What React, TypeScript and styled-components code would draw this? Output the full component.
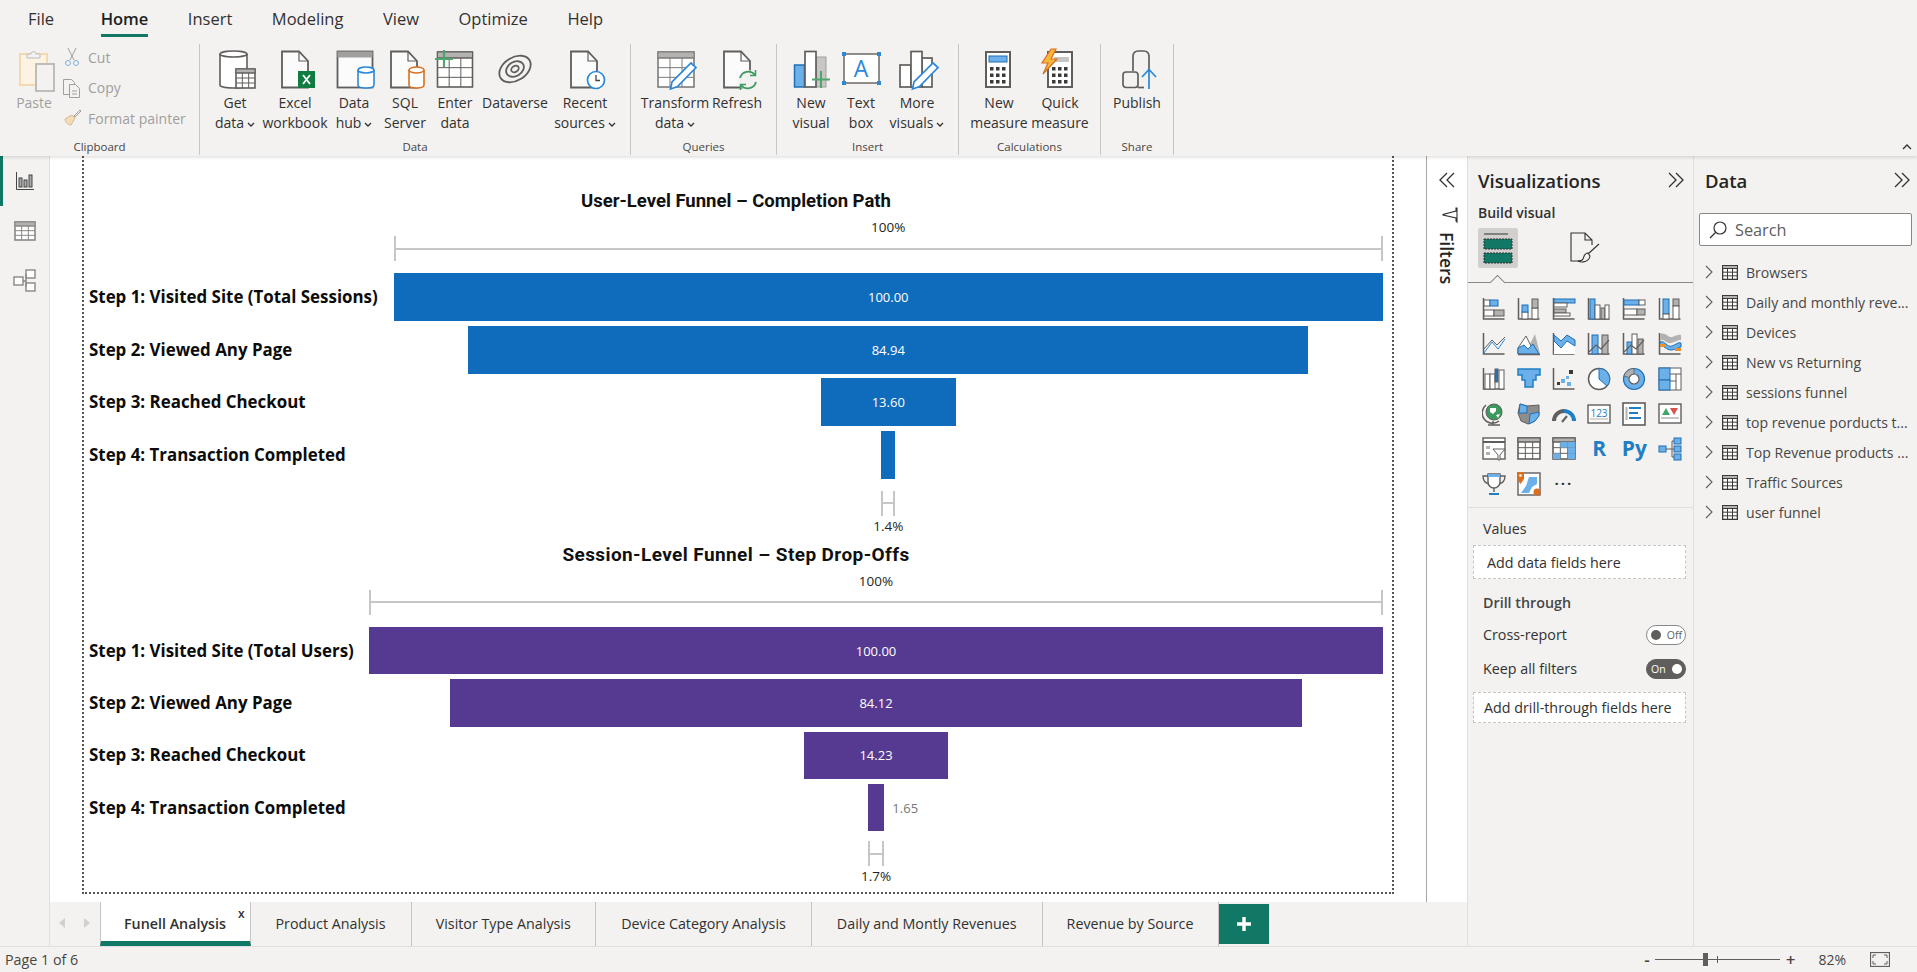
import React from 'react';
import styled, { createGlobalStyle } from 'styled-components';

const GlobalStyle = createGlobalStyle`
  html, body { margin: 0; padding: 0; height: 100%; background: #f3f2f1; overflow: hidden; }
  * { box-sizing: border-box; }
  body { font-family: 'Open Sans', 'Noto Sans', sans-serif; color: #323130; }
`;

const INK = '#605e5c';
const BLUE = '#2b88d8';
const SKY = '#6cb0ea';
const GREY = '#b4b2b0';

/* ---------- layout ---------- */
const Shell = styled.div`
  width: 1917px;
  height: 972px;
  display: flex;
  flex-direction: column;
  overflow: hidden;
`;
const Ribbon = styled.header`
  height: 156px;
  flex: none;
  position: relative;
  z-index: 2;
  box-shadow: 0 1px 4px rgba(0, 0, 0, 0.16);
  background: #f3f2f1;
`;
const MenuBar = styled.nav`
  height: 44px;
  display: flex;
  gap: 39.5px;
  padding-left: 28px;
  align-items: flex-start;
`;
const MenuItem = styled.div<{ $active?: boolean }>`
  height: 37px;
  line-height: 37px;
  font-size: 16.5px;
  font-weight: ${(p) => (p.$active ? 600 : 400)};
  color: ${(p) => (p.$active ? '#201f1e' : '#323130')};
  border-bottom: ${(p) => (p.$active ? '3px solid #117865' : '0')};
  margin-left: ${(p) => (p.$active ? '7px' : '0')};
`;
const Groups = styled.div`
  display: flex;
  height: 111px;
`;
const Group = styled.section<{ $w: number }>`
  width: ${(p) => p.$w}px;
  flex: none;
  height: 111px;
  border-right: 1px solid #c8c6c4;
  display: flex;
  flex-direction: column;
`;
const GroupBody = styled.div<{ $pad: number }>`
  height: 94px;
  padding: 6px 0 0 ${(p) => p.$pad}px;
  display: flex;
`;
const GroupName = styled.div`
  height: 17px;
  line-height: 17px;
  text-align: center;
  font-size: 11.5px;
  color: #484644;
`;
const BigButton = styled.div<{ $w: number; $muted?: boolean }>`
  width: ${(p) => p.$w}px;
  flex: none;
  display: flex;
  flex-direction: column;
  align-items: center;
  font-size: 14px;
  line-height: 20px;
  white-space: nowrap;
  color: ${(p) => (p.$muted ? '#a19f9d' : '#323130')};
  svg.big { margin-bottom: 3px; flex: none; }
`;
const Caret = styled.svg`
  width: 8px;
  height: 6px;
  margin-left: 3px;
  vertical-align: 0;
`;
const SmallStack = styled.div`
  display: flex;
  flex-direction: column;
  margin-left: 3px;
  gap: 10.5px;
  margin-top: -3px;
`;
const SmallButton = styled.div`
  display: flex;
  align-items: center;
  gap: 6px;
  height: 20px;
  font-size: 14px;
  white-space: nowrap;
  color: #a19f9d;
`;
const CollapseButton = styled.svg`
  position: absolute;
  right: 5px;
  bottom: 6px;
  width: 10px;
  height: 6px;
`;
const Workspace = styled.main`
  flex: 1;
  min-height: 0;
  display: flex;
`;
const NavRail = styled.aside`
  width: 50px;
  flex: none;
  border-right: 1px solid #e1dfdd;
  display: flex;
  flex-direction: column;
`;
const NavButton = styled.div<{ $active?: boolean }>`
  height: 50px;
  display: flex;
  align-items: center;
  justify-content: center;
  border-left: 3px solid ${(p) => (p.$active ? '#117865' : 'transparent')};
  padding-right: 3px;
`;
const ReportColumn = styled.div`
  flex: 1;
  min-width: 0;
  display: flex;
  flex-direction: column;
`;
const ReportArea = styled.div`
  flex: 1;
  min-height: 0;
  display: flex;
  background: #fff;
`;
const Canvas = styled.div`
  flex: 1;
  padding: 0 32px 8px 32px;
  min-width: 0;
`;
const Page = styled.div`
  height: 100%;
  border: 2px dotted #555;
  border-top: 0;
  padding: 33px 9px 0 5px;
`;
const FiltersStrip = styled.aside`
  width: 41px;
  flex: none;
  border-left: 1px solid #a8a6a4;
  display: flex;
  flex-direction: column;
  align-items: center;
  padding-top: 16px;
`;
const FiltersLabel = styled.div`
  writing-mode: vertical-rl;
  font-size: 17.5px;
  font-weight: 600;
  color: #252423;
  margin-top: 9px;
  line-height: 20px;
`;

/* ---------- funnel ---------- */
const Funnel = styled.section<{ $label: number }>`
  display: grid;
  grid-template-columns: ${(p) => p.$label}px 1fr;
  & + & { margin-top: 8px; }
`;
const FunnelTitle = styled.h2<{ $size: number; $track: number }>`
  grid-column: 1 / -1;
  margin: 0;
  height: 24px;
  line-height: 24px;
  text-align: center;
  font-family: Roboto, sans-serif;
  font-weight: 700;
  font-size: ${(p) => p.$size}px;
  letter-spacing: ${(p) => p.$track}px;
  color: #111;
`;
const TrackCell = styled.div`
  grid-column: 2;
  display: flex;
  flex-direction: column;
  align-items: center;
`;
const Percent = styled.div<{ $top: number }>`
  grid-column: 2;
  height: 17px;
  line-height: 17px;
  margin-top: ${(p) => p.$top}px;
  text-align: center;
  font-size: 13.5px;
  color: #252423;
`;
const Ruler = styled.div<{ $top: number }>`
  height: 25px;
  margin-top: ${(p) => p.$top}px;
  border-left: 2px solid #c8c6c4;
  border-right: 2px solid #c8c6c4;
  background: linear-gradient(#c8c6c4, #c8c6c4) center / 100% 2px no-repeat;
`;
const StepRows = styled.div<{ $top: number; $gap: number }>`
  grid-column: 1 / -1;
  margin-top: ${(p) => p.$top}px;
  display: flex;
  flex-direction: column;
  gap: ${(p) => p.$gap}px;
`;
const StepRow = styled.div<{ $h: number; $label: number }>`
  display: grid;
  grid-template-columns: ${(p) => p.$label}px 1fr;
  height: ${(p) => p.$h}px;
  align-items: center;
`;
const StepName = styled.div`
  font-size: 16.9px;
  font-weight: 700;
  color: #0c0c0c;
  white-space: nowrap;
  padding-bottom: 1px;
`;
const BarTrack = styled.div`
  height: 100%;
  display: flex;
  justify-content: center;
`;
const Bar = styled.div<{ $color: string }>`
  position: relative;
  height: 100%;
  background: ${(p) => p.$color};
  outline: 1px solid ${(p) => p.$color}99;
  outline-offset: -1px;
  color: #fff;
  font-size: 13px;
  display: flex;
  align-items: center;
  justify-content: center;
`;
const OutsideValue = styled.span`
  position: absolute;
  left: calc(100% + 8px);
  color: #777;
  font-size: 13px;
`;

/* ---------- tabs ---------- */
const TabBar = styled.div`
  height: 44px;
  flex: none;
  display: flex;
  align-items: stretch;
  background: #f3f2f1;
`;
const ArrowSlot = styled.div`
  width: 49.5px;
  flex: none;
  display: flex;
  align-items: center;
  justify-content: space-around;
  padding-bottom: 2px;
`;
const Tab = styled.div<{ $w: number; $active?: boolean }>`
  position: relative;
  width: ${(p) => p.$w}px;
  flex: none;
  display: flex;
  align-items: center;
  justify-content: center;
  font-size: 14.3px;
  font-weight: ${(p) => (p.$active ? 600 : 400)};
  white-space: nowrap;
  padding: ${(p) => (p.$active ? '3px 0 0' : '0 0 2px')};
  background: ${(p) => (p.$active ? '#fff' : 'transparent')};
  border-right: 1px solid #c8c6c4;
  border-left: ${(p) => (p.$active ? '1px solid #c8c6c4' : '0')};
  border-bottom: ${(p) => (p.$active ? '5px solid #117865' : '0')};
`;
const TabClose = styled.span`
  position: absolute;
  right: 5px;
  top: 3px;
  font-size: 12px;
  font-weight: 600;
`;
const AddTab = styled.div`
  width: 50px;
  flex: none;
  height: 40px;
  margin-top: 2px;
  background: #117865;
  color: #fff;
  display: flex;
  align-items: center;
  justify-content: center;
  svg { display: block; }
`;

/* ---------- right panes ---------- */
const VizPane = styled.aside`
  width: 226px;
  flex: none;
  border-left: 1px solid #e1dfdd;
  display: flex;
  flex-direction: column;
`;
const PaneHeader = styled.div<{ $pad: number; $end: number }>`
  height: 50px;
  flex: none;
  display: flex;
  align-items: center;
  justify-content: space-between;
  padding: 0 ${(p) => p.$end}px 2px ${(p) => p.$pad}px;
  font-size: 18.5px;
  font-weight: 600;
  color: #252423;
`;
const BuildLabel = styled.div`
  height: 14px;
  line-height: 14px;
  padding-left: 10px;
  font-size: 14px;
  font-weight: 600;
`;
const PaneTabs = styled.div`
  position: relative;
  height: 55px;
  margin-top: 8px;
  padding-left: 10px;
  border-bottom: 1px solid #8a8886;
  display: flex;
  gap: 46px;
  align-items: flex-start;
  &::after {
    content: '';
    position: absolute;
    left: 24px;
    bottom: -6px;
    width: 10px;
    height: 10px;
    background: #f3f2f1;
    border-left: 1px solid #8a8886;
    border-top: 1px solid #8a8886;
    transform: rotate(45deg);
  }
`;
const PaneTile = styled.div<{ $active?: boolean }>`
  width: 40px;
  height: 40px;
  border-radius: 2px;
  background: ${(p) => (p.$active ? '#d2d0ce' : 'transparent')};
  display: flex;
  align-items: center;
  justify-content: center;
`;
const VizGrid = styled.div`
  margin-top: 8px;
  padding: 0 0 6px 8px;
  display: grid;
  grid-template-columns: repeat(6, 35.2px);
  grid-auto-rows: 35px;
  border-bottom: 1px solid #e1dfdd;
`;
const VizCell = styled.div`
  display: flex;
  align-items: center;
  justify-content: center;
`;
const VizLetters = styled.span`
  font-size: 21px;
  font-weight: 700;
  line-height: 1;
  color: #1f7fc4;
`;
const FieldSection = styled.div`
  padding: 11px 7px 0 15px;
`;
const FieldLabel = styled.div<{ $top?: number; $strong?: boolean }>`
  height: 20px;
  line-height: 20px;
  font-size: 14.3px;
  font-weight: ${(p) => (p.$strong ? 600 : 400)};
  margin-top: ${(p) => p.$top ?? 0}px;
  color: ${(p) => (p.$strong ? '#484644' : '#323130')};
`;
const DropWell = styled.div<{ $h: number; $top: number; $pad: number }>`
  height: ${(p) => p.$h}px;
  margin: ${(p) => p.$top}px 0 0 -10px;
  padding-left: ${(p) => p.$pad}px;
  display: flex;
  align-items: center;
  background: #fff;
  border: 1px dashed #c8c6c4;
  font-size: 14.3px;
  white-space: nowrap;
`;
const OptionRow = styled.div<{ $top: number }>`
  display: flex;
  align-items: center;
  justify-content: space-between;
  height: 20px;
  margin-top: ${(p) => p.$top}px;
  padding-bottom: 2px;
  font-size: 14.3px;
`;
const Toggle = styled.div<{ $on?: boolean }>`
  width: 40px;
  height: 20px;
  margin-bottom: -2px;
  border-radius: 10px;
  display: flex;
  align-items: center;
  justify-content: space-between;
  padding: 0 3px 0 4px;
  font-size: 10.5px;
  background: ${(p) => (p.$on ? '#605e5c' : '#fff')};
  color: ${(p) => (p.$on ? '#fff' : '#605e5c')};
  border: 1px solid ${(p) => (p.$on ? '#605e5c' : '#8a8886')};
`;
const ToggleDot = styled.i<{ $on?: boolean }>`
  width: 10px;
  height: 10px;
  border-radius: 50%;
  background: ${(p) => (p.$on ? '#fff' : '#605e5c')};
`;
const DataPane = styled.aside`
  width: 224px;
  flex: none;
  border-left: 1px solid #e1dfdd;
  display: flex;
  flex-direction: column;
`;
const SearchBox = styled.div`
  height: 33px;
  margin: 7px 5px 11px 5px;
  background: #fff;
  border: 1px solid #8a8886;
  border-radius: 2px;
  display: flex;
  align-items: center;
  gap: 8px;
  padding-left: 9px;
  font-size: 16.3px;
  color: #605e5c;
`;
const TableRow = styled.div`
  height: 30px;
  display: flex;
  align-items: center;
  padding-left: 11px;
  gap: 8.5px;
  font-size: 14.1px;
  color: #484644;
  white-space: nowrap;
`;
const StatusBar = styled.footer`
  height: 26px;
  flex: none;
  border-top: 1px solid #e1dfdd;
  display: flex;
  align-items: center;
  padding-left: 5px;
  font-size: 14.3px;
  color: #484644;
`;
const ZoomControls = styled.div`
  margin-left: auto;
  display: flex;
  align-items: center;
  padding-right: 27px;
`;
const ZoomTrack = styled.div`
  position: relative;
  width: 125px;
  height: 1px;
  margin: 0 6px 0 5px;
  background: #605e5c;
`;
const ZoomThumb = styled.i`
  position: absolute;
  left: 48px;
  top: -6px;
  width: 5px;
  height: 13px;
  background: #605e5c;
`;
const ZoomTick = styled.i`
  position: absolute;
  left: 62px;
  top: -3px;
  width: 1px;
  height: 7px;
  background: #605e5c;
`;
const ZoomValue = styled.span`
  margin: 0 24px 0 23px;
  font-size: 14px;
`;
const ZoomSign = styled.span`
  font-size: 17px;
  font-weight: 600;
  line-height: 1;
`;

/* ---------- drawing helpers ---------- */
const Page_ = ({ x = 7 }: { x?: number }) => (
  <>
    <path d={`M${x} 1.5h17l9 9.5v26.5H${x}z`} fill="#fbfbfb" stroke={INK} strokeWidth="1.8" />
    <path d={`M${x + 17} 1.5V11h9`} fill="none" stroke={INK} strokeWidth="1.2" />
  </>
);
const Can = ({ x, y, w, h, c }: { x: number; y: number; w: number; h: number; c: string }) => (
  <>
    <path d={`M${x} ${y + 3}v${h - 6}c0 4 ${w} 4 ${w} 0v-${h - 6}`} fill="#fff" stroke={c} strokeWidth="1.6" />
    <ellipse cx={x + w / 2} cy={y + 3} rx={w / 2} ry="3" fill="#fff" stroke={c} strokeWidth="1.6" />
  </>
);
const Sheet = ({ x, y, w, h, cols, rows, head = 0, c = INK }: { x: number; y: number; w: number; h: number; cols: number; rows: number; head?: number; c?: string }) => {
  const lines: React.ReactNode[] = [];
  for (let i = 1; i < cols; i++) lines.push(<path key={`c${i}`} d={`M${x + (w * i) / cols} ${y + head}V${y + h}`} />);
  for (let i = head ? 0 : 1; i < rows; i++) lines.push(<path key={`r${i}`} d={`M${x} ${y + head + ((h - head) * i) / rows}H${x + w}`} />);
  return (
    <g stroke={c} fill="none" strokeWidth="1">
      <rect x={x} y={y} width={w} height={h} fill="#fff" strokeWidth="1.6" />
      {head ? <rect x={x} y={y} width={w} height={head} fill={GREY} stroke={c} /> : null}
      {lines}
    </g>
  );
};
const Pen = ({ x = 0, y = 0 }: { x?: number; y?: number }) => (
  <path transform={`translate(${x} ${y})`} d="M36 13l5 4.5-18.5 19-7 2.5 1.5-7z" fill="#fff" stroke={BLUE} strokeWidth="1.7" />
);
const Big = ({ children }: { children: React.ReactNode }) => (
  <svg className="big" width="40" height="40" viewBox="0 0 40 40" style={{ overflow: 'visible' }}>{children}</svg>
);
const Down = () => (
  <Caret viewBox="0 0 8 6"><path d="M1 1l3 3 3-3" fill="none" stroke="#323130" strokeWidth="1.3" /></Caret>
);
const Keys = ({ x, y }: { x: number; y: number }) => (
  <g fill="#3b3a39">
    {[0, 1, 2].map((r) => [0, 1, 2].map((c) => <rect key={`${r}${c}`} x={x + c * 6} y={y + r * 6.5} width="3.5" height="3.5" />))}
  </g>
);
const DoubleChevron = ({ left }: { left?: boolean }) => (
  <svg width="16" height="16" viewBox="0 0 16 16">
    <path d={left ? 'M8 1L1 8l7 7M15 1L8 8l7 7' : 'M1 1l7 7-7 7M8 1l7 7-7 7'} fill="none" stroke="#323130" strokeWidth="1.3" />
  </svg>
);

const ribbonIcons: Record<string, React.ReactNode> = {
  paste: (
    <>
      <rect x="6" y="4" width="27" height="31" fill="#fdf3e2" stroke="#f3d9b1" strokeWidth="2" />
      <path d="M13 8V4h4c0-3 5-3 5 0h4v4z" fill="#f3f2f1" stroke="#bbb" />
      <rect x="22" y="14" width="18" height="27" fill="#f3f2f1" stroke="#b9b7b5" strokeWidth="1.8" />
    </>
  ),
  get: (
    <>
      <Can x={5} y={1} w={27} h={37} c={INK} />
      <Sheet x={21} y={19} w={19} h={19} cols={3} rows={3} head={4} />
    </>
  ),
  excel: (
    <>
      <Page_ />
      <rect x="23" y="21" width="17" height="17" fill="#107c41" />
      <path d="M28 25l7 9M35 25l-7 9" stroke="#fff" strokeWidth="1.8" />
    </>
  ),
  hub: (
    <>
      <rect x="3.5" y="1.5" width="35" height="36" fill="#fbfbfb" stroke={INK} strokeWidth="1.8" />
      <rect x="3.5" y="1.5" width="35" height="6" fill="#a19f9d" />
      <Can x={24} y={17} w={16} h={21} c={BLUE} />
    </>
  ),
  sql: (
    <>
      <Page_ x={6} />
      <Can x={24} y={17} w={15} h={21} c="#d9701f" />
    </>
  ),
  enter: (
    <>
      <Sheet x={2.5} y={2} w={35} h={35} cols={3} rows={3} head={6} />
      <path d="M9 0v17M0 9h18" stroke="#4ea66d" strokeWidth="2.2" />
    </>
  ),
  dataverse: (
    <g fill="none" stroke={INK} strokeWidth="1.8" transform="rotate(-32 20 19)">
      <ellipse cx="20" cy="19" rx="17" ry="11.5" />
      <ellipse cx="20" cy="19" rx="9.5" ry="7" />
      <ellipse cx="20" cy="19" rx="4" ry="3" />
    </g>
  ),
  recent: (
    <>
      <Page_ x={6} />
      <circle cx="31" cy="30" r="8.5" fill="#fff" stroke={BLUE} strokeWidth="1.7" />
      <path d="M31 25v5.5h4" fill="none" stroke="#444" strokeWidth="1.3" />
    </>
  ),
  transform: (
    <>
      <Sheet x={3} y={2} w={36} h={35} cols={3} rows={3} head={6} c="#7d7b79" />
      <Pen />
    </>
  ),
  refresh: (
    <>
      <Page_ />
      <circle cx="31" cy="30" r="10" fill="#f3f2f1" />
      <path d="M23 28a8.5 8.5 0 0 1 15-3M39 32a8.5 8.5 0 0 1-15 3" fill="none" stroke="#3f9a62" strokeWidth="1.8" />
      <path d="M38.5 20v5.5H33M23.5 40v-5.5H29" fill="none" stroke="#3f9a62" strokeWidth="1.5" />
    </>
  ),
  visual: (
    <>
      <rect x="3.5" y="15" width="10" height="22" fill={SKY} stroke="#1f6fb5" strokeWidth="1.5" />
      <rect x="25" y="7" width="10" height="30" fill="#c8c6c4" stroke="#a19f9d" />
      <rect x="14" y="1.5" width="11" height="35.5" fill="#fff" stroke={INK} strokeWidth="1.7" />
      <path d="M30 21v17M21 29.5h18" stroke="#4ea66d" strokeWidth="2" />
    </>
  ),
  textbox: (
    <>
      <rect x="3" y="4" width="35" height="29" fill="#fff" stroke={INK} strokeWidth="1.4" />
      <g fill={BLUE}>
        <rect x="1" y="2" width="4" height="4" />
        <rect x="36" y="2" width="4" height="4" />
        <rect x="1" y="31" width="4" height="4" />
        <rect x="36" y="31" width="4" height="4" />
      </g>
      <text x="20" y="27" textAnchor="middle" fontSize="23" fontFamily="Open Sans, sans-serif" fill={BLUE}>A</text>
    </>
  ),
  more: (
    <>
      <rect x="3" y="15" width="11" height="22" fill="#fff" stroke={INK} strokeWidth="1.7" />
      <rect x="25" y="8" width="10" height="29" fill="#fff" stroke={INK} strokeWidth="1.7" />
      <rect x="14" y="1.5" width="11" height="35.5" fill="#fff" stroke={INK} strokeWidth="1.7" />
      <Pen />
    </>
  ),
  measure: (
    <>
      <rect x="7" y="2" width="24" height="35" fill="#fff" stroke={INK} strokeWidth="2" />
      <rect x="10" y="6" width="18" height="6" fill={SKY} stroke="#1f6fb5" />
      <Keys x={11} y={17} />
    </>
  ),
  quick: (
    <>
      <rect x="8" y="2" width="24" height="35" fill="#fff" stroke={INK} strokeWidth="2" />
      <rect x="14" y="7" width="15" height="5" fill="#c8c6c4" />
      <Keys x={12} y={17} />
      <path d="M11 -1L2 13h6L3 24 17 9h-6l5-10z" fill="#f6b73c" stroke="#d9701f" strokeWidth="1.2" />
    </>
  ),
  publish: (
    <>
      <path d="M16 21V6a5 5 0 0 1 5-5h6a5 5 0 0 1 5 5v14" fill="none" stroke={INK} strokeWidth="1.7" />
      <rect x="6" y="22" width="15" height="15.5" rx="3" fill="none" stroke={INK} strokeWidth="1.7" />
      <path d="M21 37.5h6" stroke={INK} strokeWidth="1.7" />
      <path d="M32 39V20M25 27l7-7.5 7 7.5" fill="none" stroke={BLUE} strokeWidth="1.7" />
    </>
  ),
};

const Axes = () => <path d="M1.5 1v21h21" fill="none" stroke={INK} strokeWidth="1.5" />;
type B = [number, number, number, number, string?];
const Bars = ({ items }: { items: B[] }) => (
  <>
    {items.map(([x, y, w, h, f], i) => (
      <rect key={i} x={x} y={y} width={w} height={h} fill={f ?? '#fff'} stroke={f === SKY ? '#1f6fb5' : INK} strokeWidth="1" />
    ))}
  </>
);
const Viz = ({ children }: { children: React.ReactNode }) => (
  <svg width="24" height="24" viewBox="0 0 24 24">{children}</svg>
);

const vizIcons: React.ReactNode[] = [
  <><Axes /><Bars items={[[2, 3, 6, 6], [8, 3, 8, 6, SKY], [2, 13, 10, 6], [12, 13, 10, 6, GREY]]} /></>,
  <><Axes /><Bars items={[[5, 15, 6, 7], [5, 8, 6, 7, SKY], [15, 11, 6, 11], [15, 2, 6, 9, GREY]]} /></>,
  <><Axes /><Bars items={[[2, 2, 21, 4, SKY], [2, 6, 13, 4], [2, 12, 12, 4, GREY], [2, 16, 16, 3]]} /></>,
  <><Axes /><Bars items={[[3, 2, 5, 20, SKY], [8, 8, 5, 14], [14, 11, 4, 11, GREY], [18, 8, 4, 14]]} /></>,
  <><Axes /><Bars items={[[2, 3, 15, 5, SKY], [17, 3, 6, 5, '#fff'], [2, 12, 13, 6], [15, 12, 8, 6, GREY]]} /></>,
  <><Axes /><Bars items={[[5, 2, 6, 15, SKY], [5, 17, 6, 5], [15, 2, 6, 7, GREY], [15, 9, 6, 13]]} /></>,
  <><Axes /><path d="M2 17l8-9 5 5 8-8" fill="none" stroke={INK} /><path d="M2 21l8-11 6 7 7-10" fill="none" stroke={BLUE} /></>,
  <><path d="M9 20l9-18 5 20H9z" fill={GREY} /><path d="M1 22V16L9 4l9 18z" fill="#fff" stroke={INK} /><path d="M1 22v-6l6-3 4 4 5-5 6 10z" fill={SKY} stroke="#1f6fb5" /><path d="M1 22.5h22" stroke={INK} strokeWidth="1.5" /></>,
  <><Axes /><path d="M2 4l7 7 6-6 8 5v12H2z" fill="#fff" stroke="none" /><path d="M2 3l7 6 6-6 8 5v6l-8-5-6 7-7-7z" fill={SKY} stroke="#1f6fb5" /></>,
  <><Axes /><Bars items={[[5, 3, 6, 19, SKY], [15, 3, 6, 19, GREY]]} /><path d="M2 20l7-7 5 4 8-9" fill="none" stroke={INK} strokeWidth="1.2" /></>,
  <><Axes /><Bars items={[[5, 10, 5, 12, SKY], [10, 2, 5, 20], [16, 7, 5, 15, GREY]]} /><path d="M2 20l7-7 5 4 8-9" fill="none" stroke={INK} strokeWidth="1.2" /></>,
  <><Axes /><path d="M2 2c6-2 8 4 12 3s6-3 9-2v5c-4 0-5 2-10 3s-6-4-11-3z" fill={GREY} /><path d="M2 10c5-2 7 6 12 4s6-4 9-3v4c-3 0-5 3-10 3s-7-5-11-4z" fill={SKY} stroke="#1f6fb5" /><path d="M2 12h5v3H2zM17 16h6v3h-6z" fill="#e8912d" /></>,
  <><Axes /><Bars items={[[3, 7, 5, 15], [8, 7, 5, 15], [13, 2, 3, 13, '#2b6fb5'], [17, 3, 5, 19]]} /></>,
  <path d="M1 2h22v6h-4v5h-3v7H8v-7H5V8H1z" fill={SKY} stroke="#1f7fc4" strokeWidth="1.5" />,
  <><Axes /><g fill={SKY}><rect x="9" y="12" width="4" height="4" /><rect x="15" y="15" width="4" height="4" /></g><g fill="#3b3a39"><rect x="5" y="15" width="3" height="3" /><rect x="17" y="3" width="4" height="4" /></g><rect x="14" y="9" width="3" height="3" fill={SKY} /></>,
  <><circle cx="12" cy="12" r="10.5" fill="#fff" stroke={INK} strokeWidth="1.5" /><path d="M12 1.5A10.5 10.5 0 0 1 20 19l-8-7z" fill={SKY} stroke="#1f6fb5" /></>,
  <><circle cx="12" cy="12" r="10.5" fill={SKY} stroke="#1f6fb5" strokeWidth="1.2" /><circle cx="12" cy="12" r="5" fill="#fff" stroke={INK} strokeWidth="1.2" /><path d="M12 1.5A10.5 10.5 0 0 0 2 9l5 1.5A5 5 0 0 1 12 7z" fill={GREY} stroke={INK} strokeWidth=".8" /></>,
  <><rect x="1" y="1" width="22" height="22" fill="#fff" stroke={INK} /><rect x="1" y="1" width="11" height="12" fill={SKY} stroke="#1f6fb5" /><rect x="1" y="13" width="11" height="10" fill={SKY} stroke="#1f6fb5" /><path d="M12 7h11M18 7v16M12 14h6" stroke={INK} /></>,
  <><circle cx="12" cy="10" r="8" fill="#3d9a5f" stroke={INK} /><path d="M8 6h6v3l-3 3-3-2zM14 13l4-1-2 4z" fill="#fff" /><path d="M4 3a10 10 0 0 0 13 16M6 23h12M11 19v4" fill="none" stroke={INK} strokeWidth="1.4" /></>,
  <><path d="M3 2l7 2 12-1v9l-4 7-7 3-7-3-3-8z" fill="#8f8d8b" stroke={INK} /><path d="M13 12l9-2v4l-4 5-6 3z" fill={SKY} stroke="#1f6fb5" /><path d="M3 2l7 2v7H2z" fill={SKY} stroke="#1f6fb5" /></>,
  <><path d="M2 19a10 10 0 0 1 10-10" fill="none" stroke={INK} strokeWidth="4" /><path d="M12 9a10 10 0 0 1 10 10" fill="none" stroke="#1f7fc4" strokeWidth="4" /><path d="M10 20l5-6" stroke={INK} strokeWidth="2" /></>,
  <><rect x="1" y="3" width="22" height="18" fill="#fbfbfb" stroke={INK} strokeWidth="1.4" /><path d="M3 17h18" stroke={GREY} /><text x="12" y="15" textAnchor="middle" fontSize="10" fontFamily="Open Sans, sans-serif" fill="#1f7fc4">123</text></>,
  <><rect x="1" y="1" width="22" height="22" fill="#fff" stroke={INK} strokeWidth="1.6" /><path d="M7 6h12M7 11h9M7 16h12" stroke="#1f7fc4" strokeWidth="2" /><path d="M4.5 5v13" stroke={GREY} strokeWidth="2" /></>,
  <><rect x="1" y="2" width="22" height="19" fill="#fff" stroke={INK} strokeWidth="1.4" /><path d="M4 13l4-7 4 7z" fill="#3fa667" /><path d="M12 6h8l-4 7z" fill="#d9534f" /><path d="M3 16h18" stroke={GREY} strokeWidth="1.5" /></>,
  <><rect x="1" y="1" width="22" height="21" fill="#fff" stroke={INK} strokeWidth="1.4" /><path d="M1 5h22" stroke={INK} strokeWidth="2" /><rect x="4" y="9" width="4" height="3" fill={GREY} /><rect x="4" y="15" width="4" height="3" fill={GREY} /><path d="M11 12h12l-5 6v5h-2v-5z" fill="#fff" stroke={INK} /></>,
  <Sheet x={1} y={1} w={22} h={21} cols={3} rows={3} head={4} />,
  <><Sheet x={1} y={1} w={22} h={21} cols={3} rows={3} head={4} /><g fill={SKY}><rect x="8.3" y="5" width="7.3" height="5.6" /><rect x="15.7" y="5" width="7.3" height="5.6" /><rect x="15.7" y="10.7" width="7.3" height="5.6" /><rect x="1" y="16.4" width="7.3" height="5.6" /><rect x="15.7" y="16.4" width="7.3" height="5.6" /></g></>,
  <VizLetters>R</VizLetters>,
  <VizLetters>Py</VizLetters>,
  <><rect x="1" y="9" width="7" height="6" fill={SKY} stroke="#1f6fb5" /><path d="M8 12h6M14 4v16h3M14 4h3M14 12h3" fill="none" stroke={INK} /><rect x="16" y="1" width="7" height="6" fill={SKY} stroke="#1f6fb5" /><rect x="16" y="9" width="7" height="6" fill={SKY} stroke="#1f6fb5" /><rect x="16" y="17" width="7" height="6" fill={SKY} stroke="#1f6fb5" /></>,
  <><path d="M6 2h12v8a6 6 0 0 1-12 0z" fill="#fff" stroke={INK} strokeWidth="1.4" /><path d="M6 2h12v3H6z" fill={SKY} /><path d="M6 4H1c0 5 2 7 6 8M18 4h5c0 5-2 7-6 8M12 16v4" fill="none" stroke={INK} strokeWidth="1.4" /><path d="M7 21h10v2H7z" fill="#1f7fc4" /></>,
  <><rect x="1" y="1" width="22" height="22" fill="#fff" stroke={INK} strokeWidth="1.4" /><path d="M12 5h8v7l-5 3-3 6H4l5-7z" fill={SKY} /><path d="M0 0h7v7l-3.5 5L0 7z" fill="#d9701f" /><circle cx="3.5" cy="3.5" r="1.3" fill="#fff" /><circle cx="20" cy="20" r="3.5" fill="#d9701f" /></>,
  <VizLetters style={{ color: '#323130', fontSize: 15, letterSpacing: 2 }}>···</VizLetters>,
];

const tables = ['Browsers', 'Daily and monthly reve...', 'Devices', 'New vs Returning', 'sessions funnel', 'top revenue porducts t...', 'Top Revenue products ...', 'Traffic Sources', 'user funnel'];
const tabs = [
  { name: 'Product Analysis', w: 161 },
  { name: 'Visitor Type Analysis', w: 184.5 },
  { name: 'Device Category Analysis', w: 216 },
  { name: 'Daily and Montly Revenues', w: 230.5 },
  { name: 'Revenue by Source', w: 176 },
];

type Step = { name: string; value: number; text?: string; outside?: boolean };
const userSteps: Step[] = [
  { name: 'Step 1: Visited Site (Total Sessions)', value: 100, text: '100.00' },
  { name: 'Step 2: Viewed Any Page', value: 84.94, text: '84.94' },
  { name: 'Step 3: Reached Checkout', value: 13.6, text: '13.60' },
  { name: 'Step 4: Transaction Completed', value: 1.4 },
];
const sessionSteps: Step[] = [
  { name: 'Step 1: Visited Site (Total Users)', value: 100, text: '100.00' },
  { name: 'Step 2: Viewed Any Page', value: 84.12, text: '84.12' },
  { name: 'Step 3: Reached Checkout', value: 14.23, text: '14.23' },
  { name: 'Step 4: Transaction Completed', value: 1.65, text: '1.65', outside: true },
];

function FunnelChart(props: { title: string; titleSize: number; titleTrack: number; steps: Step[]; color: string; label: number; barH: number; gap: number; tail: string; tailW: number; rulerGap: number }) {
  const { title, titleSize, titleTrack, steps, color, label, barH, gap, tail, tailW, rulerGap } = props;
  return (
    <Funnel $label={label}>
      <FunnelTitle $size={titleSize} $track={titleTrack}>{title}</FunnelTitle>
      <Percent $top={6}>100%</Percent>
      <TrackCell><Ruler $top={0} style={{ width: '100%' }} /></TrackCell>
      <StepRows $top={12} $gap={gap}>
        {steps.map((s) => (
          <StepRow key={s.name} $h={barH} $label={label}>
            <StepName>{s.name}</StepName>
            <BarTrack>
              <Bar $color={color} style={{ width: `${s.value}%` }}>
                {s.text && !s.outside ? s.text : null}
                {s.outside ? <OutsideValue>{s.text}</OutsideValue> : null}
              </Bar>
            </BarTrack>
          </StepRow>
        ))}
      </StepRows>
      <TrackCell><Ruler $top={rulerGap} style={{ width: `${tailW}%` }} /></TrackCell>
      <Percent $top={2}>{tail}</Percent>
    </Funnel>
  );
}

export default function App() {
  return (
    <>
      <GlobalStyle />
      <Shell>
        <Ribbon>
          <MenuBar>
            <MenuItem>File</MenuItem>
            <MenuItem $active>Home</MenuItem>
            <MenuItem>Insert</MenuItem>
            <MenuItem>Modeling</MenuItem>
            <MenuItem>View</MenuItem>
            <MenuItem>Optimize</MenuItem>
            <MenuItem>Help</MenuItem>
          </MenuBar>
          <Groups>
            <Group $w={200}>
              <GroupBody $pad={9}>
                <BigButton $w={50} $muted><Big>{ribbonIcons.paste}</Big>Paste</BigButton>
                <SmallStack>
                  <SmallButton>
                    <svg width="20" height="20" viewBox="0 0 20 20" fill="none"><path d="M6 1l6 12M14 1L8 13" stroke="#a19f9d" /><circle cx="6" cy="16" r="2.5" stroke="#7fb0dc" /><circle cx="14" cy="16" r="2.5" stroke="#7fb0dc" /></svg>
                    Cut
                  </SmallButton>
                  <SmallButton>
                    <svg width="20" height="20" viewBox="0 0 20 20" fill="none" stroke="#a19f9d"><path d="M1.5 1.5h8l3 3v12h-11z" /><path d="M7.5 6.5h6l4 4v9h-10z" fill="#f3f2f1" /><path d="M10 13h5M10 16h5" /></svg>
                    Copy
                  </SmallButton>
                  <SmallButton>
                    <svg width="20" height="20" viewBox="0 0 20 20" fill="none"><path d="M12 8l6-6 1 1-6 6z" stroke="#a19f9d" /><path d="M3 11l7-4 3 3-4 7c-3 0-6-3-6-6z" fill="#f5dcb8" stroke="#d9b98b" /></svg>
                    Format painter
                  </SmallButton>
                </SmallStack>
              </GroupBody>
              <GroupName>Clipboard</GroupName>
            </Group>
            <Group $w={431}>
              <GroupBody $pad={10}>
                <BigButton $w={50}><Big>{ribbonIcons.get}</Big>Get<span>data<Down /></span></BigButton>
                <BigButton $w={70}><Big>{ribbonIcons.excel}</Big>Excel<span>workbook</span></BigButton>
                <BigButton $w={48}><Big>{ribbonIcons.hub}</Big>Data<span>hub<Down /></span></BigButton>
                <BigButton $w={54}><Big>{ribbonIcons.sql}</Big>SQL<span>Server</span></BigButton>
                <BigButton $w={46}><Big>{ribbonIcons.enter}</Big>Enter<span>data</span></BigButton>
                <BigButton $w={74}><Big>{ribbonIcons.dataverse}</Big>Dataverse</BigButton>
                <BigButton $w={66}><Big>{ribbonIcons.recent}</Big>Recent<span>sources<Down /></span></BigButton>
              </GroupBody>
              <GroupName>Data</GroupName>
            </Group>
            <Group $w={146}>
              <GroupBody $pad={8}>
                <BigButton $w={72}><Big>{ribbonIcons.transform}</Big>Transform<span>data<Down /></span></BigButton>
                <BigButton $w={52}><Big>{ribbonIcons.refresh}</Big>Refresh</BigButton>
              </GroupBody>
              <GroupName>Queries</GroupName>
            </Group>
            <Group $w={182}>
              <GroupBody $pad={8}>
                <BigButton $w={52}><Big>{ribbonIcons.visual}</Big>New<span>visual</span></BigButton>
                <BigButton $w={48}><Big>{ribbonIcons.textbox}</Big>Text<span>box</span></BigButton>
                <BigButton $w={64}><Big>{ribbonIcons.more}</Big>More<span>visuals<Down /></span></BigButton>
              </GroupBody>
              <GroupName>Insert</GroupName>
            </Group>
            <Group $w={142}>
              <GroupBody $pad={8}>
                <BigButton $w={64}><Big>{ribbonIcons.measure}</Big>New<span>measure</span></BigButton>
                <BigButton $w={58}><Big>{ribbonIcons.quick}</Big>Quick<span>measure</span></BigButton>
              </GroupBody>
              <GroupName>Calculations</GroupName>
            </Group>
            <Group $w={73}>
              <GroupBody $pad={0}>
                <BigButton $w={72}><Big>{ribbonIcons.publish}</Big>Publish</BigButton>
              </GroupBody>
              <GroupName>Share</GroupName>
            </Group>
          </Groups>
          <CollapseButton viewBox="0 0 10 6"><path d="M1 5l4-4 4 4" fill="none" stroke="#323130" strokeWidth="1.3" /></CollapseButton>
        </Ribbon>

        <Workspace>
          <NavRail>
            <NavButton $active>
              <svg width="20" height="20" viewBox="0 0 20 20" fill="none" stroke="#444"><path d="M1.5 1v17.5H19" /><rect x="4" y="7" width="3" height="9" fill="#aaa" /><rect x="9" y="9" width="3" height="7" fill="#aaa" /><rect x="14" y="4" width="3" height="12" fill="#aaa" /></svg>
            </NavButton>
            <NavButton>
              <svg width="22" height="20" viewBox="0 0 22 20"><Sheet x={1} y={1} w={20} h={18} cols={3} rows={3} head={4} c="#8a8886" /></svg>
            </NavButton>
            <NavButton>
              <svg width="24" height="24" viewBox="0 0 24 24" fill="#fff" stroke="#8a8886" strokeWidth="1.4"><rect x="1" y="8" width="9" height="8" /><rect x="13" y="1" width="9" height="8" /><rect x="13" y="14" width="9" height="8" /><path d="M10 12h3M13 5v13" fill="none" /></svg>
            </NavButton>
          </NavRail>

          <ReportColumn>
            <ReportArea>
              <Canvas>
                <Page>
                  <FunnelChart title="User-Level Funnel – Completion Path" titleSize={18.5} titleTrack={0} steps={userSteps} color="#0f6cbd" label={304.5} barH={48} gap={4.67} tail="1.4%" tailW={1.4} rulerGap={12} />
                  <FunnelChart title="Session-Level Funnel – Step Drop-Offs" titleSize={19} titleTrack={0.4} steps={sessionSteps} color="#563a92" label={280} barH={47.5} gap={4.83} tail="1.7%" tailW={1.65} rulerGap={10} />
                </Page>
              </Canvas>
              <FiltersStrip>
                <DoubleChevron left />
                <svg width="16" height="16" viewBox="0 0 16 16" style={{ marginTop: 19, marginLeft: 6 }} fill="none" stroke="#323130"><path d="M15 1v14l-1-1V11L1 8v-.5L14 4V1z" strokeWidth="1.1" /></svg>
                <FiltersLabel>Filters</FiltersLabel>
              </FiltersStrip>
            </ReportArea>
            <TabBar>
              <ArrowSlot>
                <svg width="6" height="10" viewBox="0 0 6 10"><path d="M6 0v10L0 5z" fill="#d2d0ce" /></svg>
                <svg width="6" height="10" viewBox="0 0 6 10"><path d="M0 0v10l6-5z" fill="#d2d0ce" /></svg>
              </ArrowSlot>
              <Tab $w={151} $active>Funell Analysis<TabClose>x</TabClose></Tab>
              {tabs.map((t) => <Tab key={t.name} $w={t.w}>{t.name}</Tab>)}
              <AddTab>
                <svg width="14" height="14" viewBox="0 0 14 14"><path d="M7 0v14M0 7h14" stroke="#fff" strokeWidth="3.4" /></svg>
              </AddTab>
            </TabBar>
          </ReportColumn>

          <VizPane>
            <PaneHeader $pad={10} $end={9}>Visualizations<DoubleChevron /></PaneHeader>
            <BuildLabel>Build visual</BuildLabel>
            <PaneTabs>
              <PaneTile $active>
                <svg width="32" height="32" viewBox="0 0 32 32">
                  <path d="M2 2h24" stroke="#323130" />
                  <rect x="2" y="7" width="28" height="10" fill="#117865" stroke="#323130" strokeDasharray="2 1" />
                  <rect x="2" y="21" width="28" height="10" fill="#117865" stroke="#323130" strokeDasharray="2 1" />
                </svg>
              </PaneTile>
              <PaneTile>
                <svg width="34" height="34" viewBox="0 0 34 34" fill="none" stroke="#323130" strokeWidth="1.1">
                  <path d="M14 30H4V2h14l7 7v5M18 2v7h7" />
                  <path d="M32 13L21 23M21 22c-4 0-4 4-5 6-1 2-4 2-5 2 4 2 11 1 12-5z" />
                </svg>
              </PaneTile>
            </PaneTabs>
            <VizGrid>
              {vizIcons.map((icon, i) => (
                <VizCell key={i}>{React.isValidElement(icon) && icon.type === VizLetters ? icon : <Viz>{icon}</Viz>}</VizCell>
              ))}
            </VizGrid>
            <FieldSection>
              <FieldLabel>Values</FieldLabel>
              <DropWell $h={34} $top={6} $pad={13}>Add data fields here</DropWell>
              <FieldLabel $top={14} $strong>Drill through</FieldLabel>
              <OptionRow $top={12}>Cross-report<Toggle><ToggleDot />Off</Toggle></OptionRow>
              <OptionRow $top={14}>Keep all filters<Toggle $on>On<ToggleDot $on /></Toggle></OptionRow>
              <DropWell $h={31} $top={13} $pad={10}>Add drill-through fields here</DropWell>
            </FieldSection>
          </VizPane>

          <DataPane>
            <PaneHeader $pad={11} $end={7}>Data<DoubleChevron /></PaneHeader>
            <SearchBox>
              <svg width="18" height="18" viewBox="0 0 18 18" fill="none" stroke="#323130" strokeWidth="1.2"><circle cx="11" cy="7" r="6" /><path d="M6.5 11.5L1 17" /></svg>
              Search
            </SearchBox>
            {tables.map((t) => (
              <TableRow key={t}>
                <svg width="8" height="14" viewBox="0 0 8 14"><path d="M1 1l6 6-6 6" fill="none" stroke="#605e5c" strokeWidth="1.1" /></svg>
                <svg width="16" height="15" viewBox="0 0 16 15"><Sheet x={0.5} y={0.5} w={15} h={14} cols={3} rows={3} head={3} c="#3b3a39" /></svg>
                {t}
              </TableRow>
            ))}
          </DataPane>
        </Workspace>

        <StatusBar>
          Page 1 of 6
          <ZoomControls>
            <ZoomSign>-</ZoomSign>
            <ZoomTrack><ZoomThumb /><ZoomTick /></ZoomTrack>
            <ZoomSign>+</ZoomSign>
            <ZoomValue>82%</ZoomValue>
            <svg width="20" height="15" viewBox="0 0 20 15" fill="none" stroke="#605e5c"><rect x="0.5" y="0.5" width="19" height="14" strokeWidth="1.2" /><path d="M3 6V3h3M14 3h3v3M17 9v3h-3M6 12H3V9" /></svg>
          </ZoomControls>
        </StatusBar>
      </Shell>
    </>
  );
}
